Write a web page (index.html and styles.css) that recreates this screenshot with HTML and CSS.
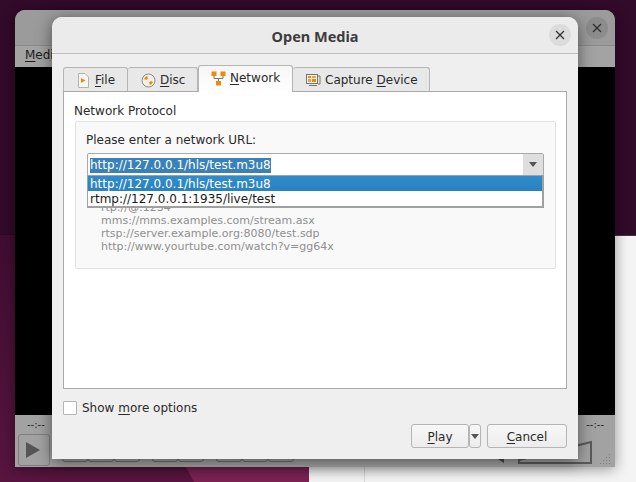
FILE: index.html
```html
<!DOCTYPE html>
<html lang="en">
<head>
<meta charset="utf-8">
<title>Open Media</title>
<link rel="stylesheet" href="styles.css">
</head>
<body>
<div class="desktop">
  <div class="wall-lower"></div>
  <div class="wall-bright"></div>
  <div class="back-window"></div>
  <div class="player">
    <div class="player-title">
      <span class="player-close"><svg width="10" height="10" viewBox="0 0 10 10"><path d="M1 1l8 8M9 1l-8 8" stroke="#2e2e2e" stroke-width="1.2"/></svg></span>
    </div>
    <div class="player-menu"><span><u>M</u>edia</span></div>
    <div class="player-video"></div>
    <div class="player-controls">
      <div class="times"><span>--:--</span><span>--:--</span></div>
      <div class="ctl-row">
        <div class="play-big"><svg width="16" height="18" viewBox="0 0 16 18"><path d="M1 1l14 8-14 8z" fill="#555"/></svg></div>
        <div class="ctl-group ctl-first"><span></span><span></span><span></span></div>
        <div class="ctl-group"><span></span><span></span></div>
        <div class="ctl-group"><span></span><span></span><span></span></div>
        <svg class="volume" width="96" height="26" viewBox="0 0 96 26"><path d="M1 19l6 4v-5z" fill="#444"/><path d="M22 20L94 2V23H22z" fill="none" stroke="#5a5a5a" stroke-width="2"/></svg>
      </div>
      <svg class="grip" width="12" height="12" viewBox="0 0 12 12"><path d="M9 1h1v1h-1zM6 4h1v1h-1zM9 4h1v1h-1zM3 7h1v1h-1zM6 7h1v1h-1zM9 7h1v1h-1zM0 10h1v1h-1zM3 10h1v1h-1zM6 10h1v1h-1zM9 10h1v1h-1z" fill="#7d7d7d"/></svg>
    </div>
  </div>
  <div class="dialog">
    <header class="dialog-title">
      <h1>Open Media</h1>
      <span class="dialog-close"><svg width="10" height="10" viewBox="0 0 10 10"><path d="M1 1l8 8M9 1l-8 8" stroke="#2e2e2e" stroke-width="1.2"/></svg></span>
    </header>
    <div class="dialog-body">
      <div class="tabs">
        <div class="tab tab-file">
          <svg width="11" height="15" viewBox="0 0 11 15"><path d="M.5.500h6.500l3.500 3.500v10.500h-10z" fill="#f6f6f4" stroke="#b5b2ab"/><path d="M3 5l4.500 2.500-4.500 2.500z" fill="#f08a00"/></svg>
          <span><u>F</u>ile</span>
        </div>
        <div class="tab tab-disc">
          <svg width="15" height="15" viewBox="0 0 15 15"><circle cx="7.500" cy="7.500" r="6.500" fill="#f1efe9" stroke="#8f8c85"/><path d="M3 6a5 5 0 0 1 3-3l1 2.500a2.500 2.500 0 0 0-1.500 1.500zM12 9a5 5 0 0 1-3 3l-1-2.500a2.500 2.500 0 0 0 1.500-1.500z" fill="#f08a00"/></svg>
          <span><u>D</u>isc</span>
        </div>
        <div class="tab tab-active tab-network">
          <svg width="15" height="15" viewBox="0 0 15 15"><path d="M3 5v2.500h9V5M7.500 7.500V11" fill="none" stroke="#777" stroke-width="1"/><rect x="0.500" y="0.500" width="5" height="4.500" fill="#f08a00"/><rect x="9.500" y="0.500" width="5" height="4.500" fill="#f08a00"/><rect x="5" y="10" width="5" height="4.500" fill="#f08a00"/></svg>
          <span><u>N</u>etwork</span>
        </div>
        <div class="tab tab-capture">
          <svg width="15" height="14" viewBox="0 0 15 14"><rect x="0.500" y="1.500" width="11" height="9" fill="#f4f2ec" stroke="#77746d"/><rect x="2" y="3" width="3" height="2" fill="#f08a00"/><rect x="6" y="3" width="4" height="2" fill="#f0a040"/><rect x="2" y="6" width="3" height="3" fill="#f0a040"/><rect x="6" y="6" width="4" height="3" fill="#f08a00"/><path d="M12 3h2v8h-2M3 12.500h8" fill="none" stroke="#77746d"/></svg>
          <span>Capture <u>D</u>evice</span>
        </div>
      </div>
      <section class="panel">
        <div class="group-title">Network Protocol</div>
        <div class="group">
          <label class="url-label">Please enter a network URL:</label>
          <div class="combo-wrap">
            <div class="combo">
              <div class="combo-field"><span class="selected-text">http://127.0.0.1/hls/test.m3u8</span></div>
              <div class="combo-arrow"><i class="arrow"></i></div>
            </div>
            <ul class="dropdown">
              <li class="current">http://127.0.0.1/hls/test.m3u8</li>
              <li>rtmp://127.0.0.1:1935/live/test</li>
            </ul>
          </div>
          <ul class="examples">
            <li>rtp://@:1234</li>
            <li>mms://mms.examples.com/stream.asx</li>
            <li>rtsp://server.example.org:8080/test.sdp</li>
            <li>http://www.yourtube.com/watch?v=gg64x</li>
          </ul>
        </div>
      </section>
      <div class="more"><span class="checkbox"></span><span>Show <u>m</u>ore options</span></div>
      <div class="actions">
        <button class="btn btn-play"><u>P</u>lay</button>
        <button class="btn btn-menu"><i class="arrow"></i></button>
        <button class="btn btn-cancel"><u>C</u>ancel</button>
      </div>
    </div>
  </div>
</div>
</body>
</html>
```
FILE: styles.css
```css
* { box-sizing: border-box; }
html, body { margin: 0; padding: 0; }
body { width: 636px; height: 482px; overflow: hidden; font-family: "DejaVu Sans", sans-serif; font-size: 12px; color: #2a2a2a; }
u { text-underline-offset: 2px; }
.desktop { position: relative; width: 636px; height: 482px; overflow: hidden; background: #320a2a; }
.wall-lower { position: absolute; left: 0; top: 234px; width: 320px; height: 248px; border-top: 1px solid #2a0824; background: linear-gradient(#3f0d31, #581540); }
.wall-bright { position: absolute; left: 186px; top: 467px; width: 124px; height: 15px; background: #7c2354; clip-path: polygon(0 0, 100% 0, 100% 100%, 8px 100%); }
.back-window { position: absolute; left: 309px; top: 235px; width: 327px; height: 247px; background: #f4f4f4; border-top: 1px solid #3a3a3a; }
.back-window::after { content: ""; position: absolute; left: 55px; top: 0; bottom: 0; width: 1px; background: #d8d8d8; }
.player { position: absolute; left: 15px; top: 10px; width: 600px; height: 457px; border-radius: 10px 10px 0 0; background: #a5a5a5; box-shadow: 0 2px 14px rgba(0,0,0,.4); display: flex; flex-direction: column; }
.player-title { height: 36px; flex: none; border-bottom: 1px solid #8a8a8a; background: #9b9b9b; border-radius: 10px 10px 0 0; display: flex; justify-content: flex-end; align-items: center; padding-right: 7px; }
.player-close { width: 22px; height: 22px; border-radius: 50%; background: #8c8c8c; display: flex; align-items: center; justify-content: center; }
.player-menu { height: 21px; flex: none; background: #a3a3a3; padding: 2px 10px; color: #1c1c1c; }
.player-video { flex: 1; background: #000; }
.player-controls { height: 52px; flex: none; background: #a2a2a2; position: relative; }
.times { display: flex; justify-content: space-between; height: 19px; padding: 4px 11px 0 12px; font-size: 10px; line-height: 12px; color: #222; }
.ctl-row { display: flex; align-items: flex-start; padding-left: 3px; }
.play-big { width: 32px; height: 32px; flex: none; border: 1px solid #7f7f7f; border-radius: 3px; display: flex; align-items: center; justify-content: center; padding-right: 2px; }
.ctl-group { display: flex; gap: 0; margin-left: 12px; margin-top: 2px; }
.ctl-first { margin-left: 12px; }
.ctl-group span { width: 26px; height: 26px; border: 1px solid #6e6e6e; border-radius: 3px; }
.volume { margin-left: 203px; margin-top: 6px; flex: none; }
.grip { position: absolute; right: 3px; bottom: 2px; }
.dialog { position: absolute; left: 52px; top: 17px; width: 526px; height: 442px; background: #efefef; border-radius: 10px 10px 0 0; box-shadow: 0 3px 16px rgba(0,0,0,.5); display: flex; flex-direction: column; }
.dialog-title { height: 37px; flex: none; background: #ebebeb; border-bottom: 1px solid #bdbdbd; border-radius: 10px 10px 0 0; display: flex; align-items: center; justify-content: center; position: relative; padding-top: 1px; }
.dialog-title h1 { margin: 0; font-size: 14.500px; font-weight: 700; color: #3d3d3d; font-family: "Noto Sans", "DejaVu Sans", sans-serif; }
.dialog-close { position: absolute; right: 7px; top: 7px; width: 22px; height: 22px; border-radius: 50%; background: #dcdcdc; display: flex; align-items: center; justify-content: center; }
.dialog-body { flex: 1; display: flex; flex-direction: column; padding: 11px 11px 0; }
.tabs { display: flex; align-items: flex-end; height: 26px; position: relative; z-index: 1; }
.tab { height: 24px; flex: none; display: flex; align-items: center; gap: 4px; background: #e8e8e8; border: 1px solid #b5b5b5; border-bottom: 0; border-left-width: 0; border-radius: 3px 3px 0 0; padding: 1px 0 0 13px; }
.tab-file { width: 65px; border-left-width: 1px; padding-left: 14px; gap: 6px; }
.tab-disc { width: 70px; }
.tab-active { width: 95px; background: linear-gradient(#f6f6f6, #fff); border-left-width: 1px; padding: 0 0 2px 12px; margin-bottom: -1px; height: 27px; }
.tab-capture { width: 137px; }
.panel { height: 298px; flex: none; background: #fff; border: 1px solid #a9a9a9; padding: 12px 10px 0; }
.group-title { line-height: 15px; }
.group { margin: 2px 0 0 1px; height: 148px; background: #f9f9f9; border: 1px solid #e2e2e2; border-radius: 2px; padding: 11px 10px 0; }
.url-label { display: block; line-height: 15px; }
.combo-wrap { position: relative; margin: 5px 0 0 1px; }
.combo { height: 23px; width: 457px; display: flex; background: #fff; border: 1px solid #a9a9a9; border-radius: 2px; }
.combo-field { flex: 1; padding: 4px 2px 0; line-height: 15px; }
.selected-text { background: #3a81b8; color: #fff; display: inline-block; }
.combo-arrow { width: 20px; background: #dedede; display: flex; align-items: center; justify-content: center; }
.arrow { display: block; width: 0; height: 0; border: 4px solid transparent; border-top: 5px solid #555; border-bottom: 0; }
.dropdown { position: absolute; left: 0; top: 22px; width: 457px; margin: 0; padding: 0; list-style: none; background: #fff; border: 1px solid #a0a0a0; border-bottom-width: 2px; border-right-width: 2px; z-index: 2; }
.dropdown li { height: 15px; line-height: 17px; padding-left: 2px; color: #1a1a1a; }
.dropdown li.current { background: linear-gradient(#2f8ccb, #2a82bc); color: #fff; }
.examples { margin: 25px 0 0; padding: 0 0 0 15px; list-style: none; font-size: 11px; color: #8f8f8f; line-height: 13px; }
.more { display: flex; align-items: center; gap: 5px; margin-top: 11px; height: 15px; flex: none; }
.checkbox { width: 14px; height: 14px; background: #fff; border: 1px solid #b5b5b5; border-radius: 1px; }
.actions { display: flex; justify-content: flex-end; margin-top: 9px; }
.btn { height: 24px; background: linear-gradient(#f7f7f7, #ececec); border: 1px solid #b5b5b5; border-radius: 3px; font: inherit; color: #2a2a2a; padding: 1px 0 0; display: flex; align-items: center; justify-content: center; }
.btn-play { width: 58px; }
.btn-menu { width: 12px; }
.btn-cancel { width: 80px; margin-left: 6px; }
```
